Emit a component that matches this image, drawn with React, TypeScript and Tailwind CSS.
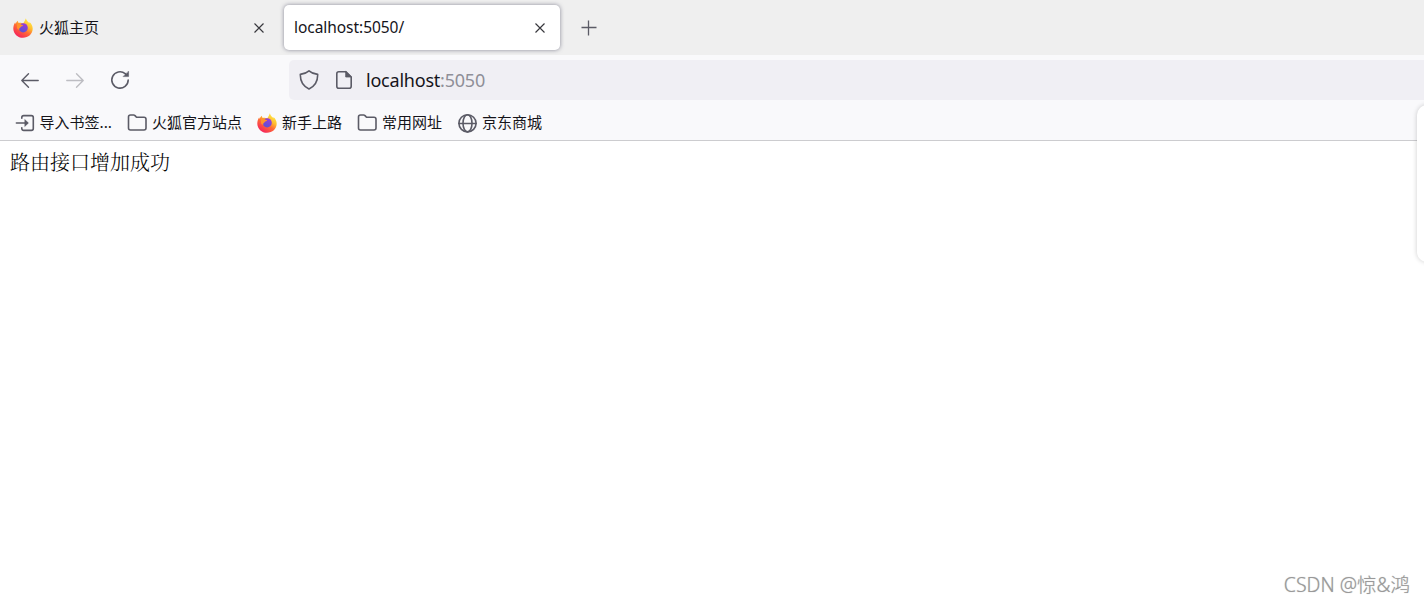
import { useId } from "react";
import type { ReactNode } from "react";

const iconProps = {
  xmlns: "http://www.w3.org/2000/svg",
  width: 20,
  height: 20,
  viewBox: "0 0 20 20",
  fill: "none",
  stroke: "#5b5b66",
  strokeWidth: 1.6,
  strokeLinecap: "round",
  strokeLinejoin: "round",
  className: "shrink-0",
} as const;

function FirefoxIcon() {
  const id = useId();

  return (
    <svg width="20" height="20" viewBox="0 0 20 20" className="shrink-0">
      <defs>
        <linearGradient id={`${id}-body`} x1="0.85" y1="0.05" x2="0.25" y2="0.95">
          <stop offset="0" stopColor="#fff04a" />
          <stop offset="0.35" stopColor="#ffbd2e" />
          <stop offset="0.6" stopColor="#ff6a35" />
          <stop offset="1" stopColor="#f5245c" />
        </linearGradient>
        <linearGradient id={`${id}-globe`} x1="0.7" y1="0" x2="0.3" y2="1">
          <stop offset="0" stopColor="#a03bd8" />
          <stop offset="1" stopColor="#5552d4" />
        </linearGradient>
      </defs>
      <path
        fill={`url(#${id}-body)`}
        d="M12.9.2c.4 1.9 1.4 3 2.6 4 .4.3.6.7.8 1.2.2-.5.2-.9.1-1.3 2 1.5 3.3 4.2 3.3 6.7 0 5-4.400 9-9.700 9S.4 15.8.3 10.7C.3 8.3 1 6 2.2 4.2c0 .7.1 1.2.4 1.6.5-1.3 1.3-2.4 2.3-3.1 0 .9.3 1.7.8 2.3.9-.3 2-.3 3 0 .6.1 1.200.100 1.800.100 1-1.500 1.600-3 2.400-4.900Z"
      />
      <circle cx="10.2" cy="9.8" r="4.6" fill={`url(#${id}-globe)`} />
      <path
        fill="#ff932b"
        d="M4 6.200c1.200-.6 2.400-.8 3.500-.3.6.6 1.200 1 2.600 1-.1.9-.8 1.200-1.900 1.600-.5.3-.4.8-.8 1-1 .5-1.500 1.300-1 2.600l-2-1.200C3.900 9.600 3.700 8 4 6.200Z"
      />
    </svg>
  );
}

function CloseIcon() {
  return (
    <svg width="10" height="10" viewBox="0 0 10 10" stroke="#38383d" strokeWidth="1.15" className="shrink-0">
      <path d="m.5.5 9 9m0-9-9 9" />
    </svg>
  );
}

function FolderIcon() {
  return (
    <svg {...iconProps}>
      <path d="M1.5 4c0-1.2.8-2 2-2h3.1c.6 0 1 .2 1.4.6l1.2 1.3c.3.3.6.4 1 .4H17c1.200 0 2 .8 2 2V15c0 1.200-.8 2-2 2H3.500c-1.200 0-2-.8-2-2Z" />
    </svg>
  );
}

function ImportIcon() {
  return (
    <svg {...iconProps}>
      <path d="M6.800 5.300v-.8c0-1.100.8-1.900 1.900-1.900h7.700c1.100 0 1.900.8 1.900 1.900v11c0 1.100-.8 1.900-1.900 1.900H8.700c-1.100 0-1.900-.8-1.900-1.900v-.8M1.400 10H12" />
      <path d="M10 6.800 13.400 10 10 13.200Z" fill="#5b5b66" strokeWidth="0.6" />
    </svg>
  );
}

function GlobeIcon() {
  return (
    <svg {...iconProps}>
      <circle cx="10.500" cy="10.300" r="8.600" />
      <ellipse cx="10.500" cy="10.300" rx="4.500" ry="8.600" />
      <path d="M2 10.500h17" />
    </svg>
  );
}

function Bookmark({ icon, label }: { icon: ReactNode; label: string }) {
  return (
    <div className="flex items-center gap-[5px]">
      {icon}
      <span className="mb-[2px] whitespace-nowrap text-[15px] leading-5 text-[#15141a]">{label}</span>
    </div>
  );
}

function TabStrip() {
  return (
    <div className="flex h-[55px] items-start bg-[#efefef] pt-[5px]">
      <div className="flex h-[45px] w-[283px] items-center pl-[13px] pr-[19px]">
        <FirefoxIcon />
        <span className="mb-[2px] ml-[6px] flex-1 text-[15px] leading-5 text-[#15141a]">火狐主页</span>
        <CloseIcon />
      </div>
      <div className="ml-[1px] flex h-[45px] w-[276px] items-center rounded-[5px] bg-white pl-[10px] pr-[15px] shadow-[0_0_4px_rgba(100,100,120,0.75)]">
        <span className="mb-[2px] flex-1 font-[Noto_Sans,Noto_Sans_CJK_SC,sans-serif] text-[15.5px] leading-5 tracking-[-0.05px] text-[#15141a]">
          localhost:5050/
        </span>
        <CloseIcon />
      </div>
      <div className="flex h-[45px] w-[58px] items-center justify-center">
        <svg width="16" height="16" viewBox="0 0 16 16" stroke="#5b5b66" strokeWidth="1.3">
          <path d="M7.5.5v15M.5 7.500h15" />
        </svg>
      </div>
    </div>
  );
}

function NavBar() {
  return (
    <div className="flex h-[50px] items-center pl-5">
      <div className="flex w-[269px] items-center gap-[25px]">
        <svg {...iconProps}>
          <path d="M18.200 10.500H1.800m6.700-6.700L1.800 10.500l6.700 6.700" strokeWidth="1.4" />
        </svg>
        <svg {...iconProps} stroke="#bdbdc2">
          <path d="M1.800 10.500h16.400M11.500 3.800l6.700 6.700-6.700 6.700" strokeWidth="1.4" />
        </svg>
        <svg {...iconProps}>
          <path d="M18.200 10a8.200 8.200 0 1 1-3-6.400l1.700 1.600" />
          <path d="M18.600 1.400v5.200h-5.200Z" fill="#5b5b66" strokeWidth="0.5" />
        </svg>
      </div>
      <div className="flex h-10 flex-1 items-center rounded-l-[5px] bg-[#f0eff4] pl-[10px]">
        <svg {...iconProps}>
          <path d="M10 .9C7.800 2.900 4.800 4 1.300 4.400c-.1 6.200 1.900 11.400 8.700 14.600 6.800-3.200 8.800-8.400 8.700-14.600C15.200 4 12.200 2.900 10 .9Z" />
        </svg>
        <svg {...iconProps} className="ml-[15px] shrink-0">
          <path d="M11.700 1.700H4.800c-1.200 0-2 .8-2 2v12.600c0 1.200.8 2 2 2h10.400c1.200 0 2-.8 2-2V7Z" />
          <path d="M11.700 1.700V7h5.500Z" fill="#5b5b66" strokeWidth="0.8" />
        </svg>
        <span className="ml-3 font-[Noto_Sans,Noto_Sans_CJK_SC,sans-serif] text-[18px] leading-6 tracking-[-0.22px] text-[#15141a]">
          localhost<span className="text-[#8f8f98]">:5050</span>
        </span>
      </div>
    </div>
  );
}

function BookmarksBar() {
  return (
    <div className="flex h-9 items-center gap-[15px] border-b border-[#cccccf] pl-[14.5px]">
      <Bookmark icon={<ImportIcon />} label="导入书签..." />
      <Bookmark icon={<FolderIcon />} label="火狐官方站点" />
      <Bookmark icon={<FirefoxIcon />} label="新手上路" />
      <Bookmark icon={<FolderIcon />} label="常用网址" />
      <Bookmark icon={<GlobeIcon />} label="京东商城" />
    </div>
  );
}

export default function App() {
  return (
    <div className="relative flex h-[603px] w-full flex-col overflow-hidden bg-white font-[Noto_Sans_CJK_SC,sans-serif]">
      <TabStrip />
      <div className="bg-[#f9f9fb]">
        <NavBar />
        <BookmarksBar />
      </div>
      <main className="flex flex-1 flex-col justify-between">
        <p className="pl-[10px] pt-[9px] font-[Noto_Serif_CJK_SC,Noto_Sans_CJK_SC,serif] text-[20px] font-light leading-6 text-black">
          路由接口增加成功
        </p>
        <p className="self-end pb-[6px] pr-[14px] font-[Noto_Sans,Noto_Sans_CJK_SC,sans-serif] text-[19.5px] font-light leading-6 text-[#999] [text-shadow:0_0_1px_#bbb]">
          CSDN @惊&amp;鸿
        </p>
      </main>
      {/* side panel peeking in from the right edge */}
      <div className="absolute -right-[33px] top-[105px] h-[157px] w-10 rounded-[10px] bg-white shadow-[0_0_5px_rgba(0,0,0,0.2)]" />
    </div>
  );
}
